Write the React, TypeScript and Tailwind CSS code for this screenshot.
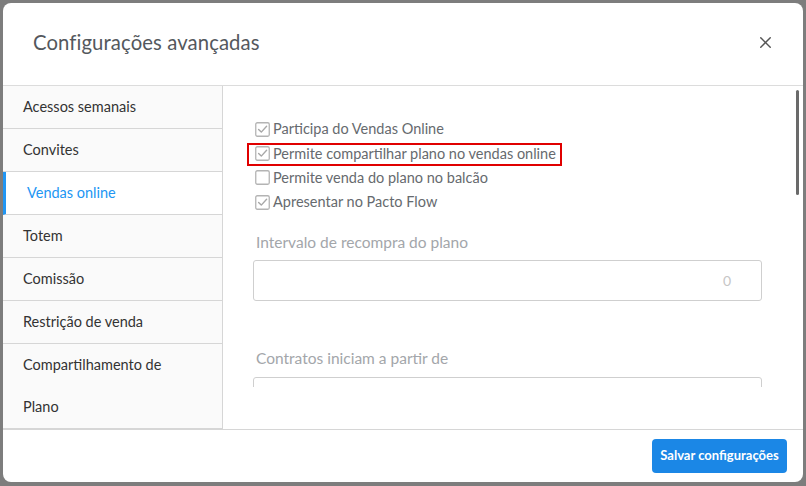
import { X } from "lucide-react";

type Option = { label: string; checked: boolean; highlight?: boolean };

const menu = [
  "Acessos semanais",
  "Convites",
  "Vendas online",
  "Totem",
  "Comissão",
  "Restrição de venda",
  "Compartilhamento de Plano",
];

const options: Option[] = [
  { label: "Participa do Vendas Online", checked: true },
  { label: "Permite compartilhar plano no vendas online", checked: true, highlight: true },
  { label: "Permite venda do plano no balcão", checked: false },
  { label: "Apresentar no Pacto Flow", checked: true },
];

function CheckBox({ checked }: { checked: boolean }) {
  return (
    <svg width="15" height="15" viewBox="0 0 15 15" className="shrink-0" aria-hidden>
      <rect x="0.75" y="0.75" width="13.5" height="13.5" rx="1.5" fill="#fff" stroke="#b4b4b4" strokeWidth="1.3" />
      {checked ? (
        <path d="M3.6 7.4 L6.3 10.1 L11.6 4.2" fill="none" stroke="#a8a8a8" strokeWidth="1.4" strokeLinecap="round" strokeLinejoin="round" />
      ) : null}
    </svg>
  );
}

export default function App() {
  const active = "Vendas online";

  return (
    <div
      className="h-[486px] w-[806px] overflow-hidden bg-[#7d7d7d] pl-[3px] pt-[3px]"
      style={{ fontFamily: "Lato, 'Noto Sans', sans-serif" }}
    >
      <div className="flex h-[479px] w-[800px] flex-col overflow-hidden rounded-[8px] bg-white">
        <header className="flex h-[83px] shrink-0 items-center justify-between border-b border-[#dcdcdc] pb-[3px] pl-[30px] pr-[28px]">
          <h2 className="text-[20.3px] font-normal tracking-[0.1px] text-[#54585d]">Configurações avançadas</h2>
          <X className="h-[19px] w-[19px] text-[#555]" strokeWidth={1.8} />
        </header>

        <div className="flex min-h-0 flex-1">
          <nav className="w-[220px] shrink-0 border-r border-[#d6d6d6] bg-[#fafafa]">
            {menu.map((item) => {
              const isActive = item === active;
              return (
                <div
                  key={item}
                  className={
                    isActive
                      ? "border-b border-l-[3px] border-b-[#d6d6d6] border-l-[#2196f3] bg-white pl-[21px] pr-[30px] text-[14.5px] leading-[42px] text-[#2196f3]"
                      : "border-b border-[#d6d6d6] pl-[20px] pr-[30px] text-[14.5px] leading-[42px] text-[#333]"
                  }
                >
                  {item}
                </div>
              );
            })}
          </nav>

          <section className="relative min-w-0 flex-1">
            <div className="h-[301px] overflow-hidden pl-[32px] pr-[40px] pt-[31px]">
              <div className="flex flex-col">
                {options.map((opt) => (
                  <div key={opt.label} className="relative flex h-[24.3px] items-center gap-[3px]">
                    {opt.highlight ? (
                      <span className="absolute left-[-8px] top-[2px] h-[23px] w-[315px] border-2 border-[#e00000]" />
                    ) : null}
                    <CheckBox checked={opt.checked} />
                    <span className="text-[14.5px] text-[#666a6e]">{opt.label}</span>
                  </div>
                ))}
              </div>

              <label className="mt-[17px] block pl-[1px] text-[15.5px] text-[#a3a6aa]">Intervalo de recompra do plano</label>
              <div className="ml-[-2px] mt-[6px] flex h-[41px] w-[509px] items-center justify-end rounded-[3px] border border-[#cfcfcf] pr-[30px] text-[14px] text-[#c6c6c6]">
                0
              </div>

              <label className="mt-[46px] block pl-[1px] text-[15.5px] text-[#a3a6aa]">Contratos iniciam a partir de</label>
              <div className="ml-[-2px] mt-[6px] h-[41px] w-[509px] rounded-[3px] border border-[#cfcfcf]" />
            </div>
            <span className="absolute right-[4px] top-[4px] h-[105px] w-[3px] rounded-full bg-[#6a6a6a]" />
          </section>
        </div>

        <footer className="flex h-[53px] shrink-0 items-center justify-end border-t border-[#d6d6d6] pr-[16px]">
          <button
            type="button"
            className="h-[34px] w-[135px] rounded-[4px] bg-[#1b87e6] text-[13px] font-bold text-white"
          >
            Salvar configurações
          </button>
        </footer>
      </div>
    </div>
  );
}
